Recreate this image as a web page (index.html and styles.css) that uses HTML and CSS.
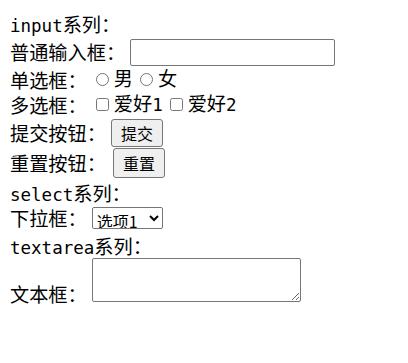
FILE: index.html
```html
<!DOCTYPE html>
<html lang="zh-CN">
<head>
<meta charset="UTF-8">
<meta name="viewport" content="width=device-width, initial-scale=1.0">
<title>表单元素</title>
<link rel="stylesheet" href="styles.css">
</head>
<body>
<form class="demo-form">
    <div class="row title"><span class="en">input</span>系列：</div>

    <div class="row row-text">
        <span class="label">普通输入框：</span>
        <input type="text" class="text-input">
    </div>

    <div class="row row-radio">
        <span class="label">单选框：</span>
        <label class="option"><input type="radio" name="sex">男</label>
        <label class="option"><input type="radio" name="sex">女</label>
    </div>

    <div class="row row-check">
        <span class="label">多选框：</span>
        <label class="option"><input type="checkbox">爱好<span class="en">1</span></label>
        <label class="option"><input type="checkbox">爱好<span class="en">2</span></label>
    </div>

    <div class="row row-btn">
        <span class="label">提交按钮：</span>
        <input type="submit" class="btn btn-submit" value="提交">
    </div>

    <div class="row row-btn">
        <span class="label">重置按钮：</span>
        <input type="reset" class="btn btn-reset" value="重置">
    </div>

    <div class="row title title-low"><span class="en">select</span>系列：</div>

    <div class="row row-select">
        <span class="label">下拉框：</span>
        <select class="dropdown">
            <option>选项1</option>
            <option>选项2</option>
            <option>选项3</option>
        </select>
    </div>

    <div class="row title title-area"><span class="en">textarea</span>系列：</div>

    <div class="row-area">
        <span class="label">文本框：</span><textarea class="text-area"></textarea>
    </div>
</form>
</body>
</html>
```

FILE: styles.css
```css
body {
    margin: 12px 8px 8px 10px;
    font-family: "DejaVu Sans Mono", "Noto Sans CJK SC", monospace;
    font-size: 19.2px;
    color: #000;
    background: #fff;
}

.demo-form {
    display: flex;
    flex-direction: column;
}

.row {
    display: flex;
    align-items: center;
    line-height: 22px;
    white-space: nowrap;
}

.en {
    font-size: 17.5px;
}

.row .label {
    padding-top: 4px;
}

.title {
    height: 24px;
    padding-top: 4px;
    box-sizing: border-box;
}

.title-low {
    height: 25px;
    padding-top: 8px;
}

.title-area {
    height: 25px;
    padding-top: 4px;
}

/* text input */
.row-text {
    height: 32px;
}

.text-input {
    width: 205px;
    height: 27px;
    margin: 0 0 0 5px;
    padding: 1px 2px;
    box-sizing: border-box;
    border: 1px solid #767676;
    border-radius: 2px;
    font-size: 16px;
}

/* radio + checkbox */
.row-radio {
    height: 23px;
}

.row-check {
    height: 27px;
}

.option {
    display: flex;
    align-items: center;
    margin-left: 7px;
}

.option:first-of-type {
    margin-left: 9px;
}

.option input {
    width: 13px;
    height: 13px;
    margin: 0 5px 0 0;
}

/* buttons */
.row-btn {
    height: 30px;
}

.btn {
    height: 28px;
    padding: 0 9px;
    margin-left: 5px;
    font-family: "Noto Sans CJK SC", sans-serif;
    font-size: 16px;
    color: #000;
    background: #efefef;
    border: 1px solid #767676;
    border-radius: 3px;
}

.btn-reset {
    height: 30px;
    margin-left: 7px;
}

/* select */
.row-select {
    height: 30px;
}

.dropdown {
    width: 71px;
    height: 22px;
    margin-left: 5px;
    font-family: "Noto Sans CJK SC", sans-serif;
    font-size: 16px;
    color: #000;
    background: #fff;
    border: 1px solid #767676;
    border-radius: 2px;
    padding: 0;
}

/* textarea */
.row-area {
    white-space: nowrap;
    line-height: 24px;
}

.text-area {
    width: 209px;
    height: 44px;
    margin: 0 0 0 5px;
    box-sizing: border-box;
    border: 1px solid #767676;
    border-radius: 2px;
    vertical-align: baseline;
}
```
